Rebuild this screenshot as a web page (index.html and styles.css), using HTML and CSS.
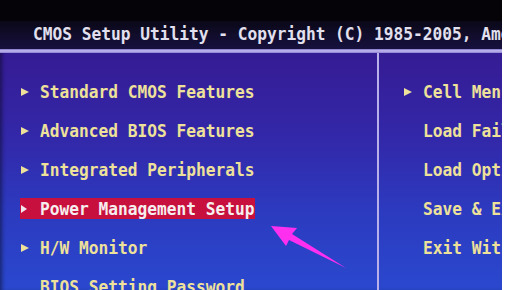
FILE: index.html
```html
<!DOCTYPE html>
<html>
<head>
<meta charset="utf-8">
<link rel="stylesheet" href="styles.css">
</head>
<body>
<div class="screen">
  <div class="top-black"></div>
  <div class="titlebar"><span class="label">CMOS Setup Utility - Copyright (C) 1985-2005, American Megatrends, Inc.</span></div>
  <div class="rule"></div>
  <div class="panels">
    <ul class="menu menu-left">
      <li class="item"><span class="tri"></span><span class="label">Standard CMOS Features</span></li>
      <li class="item"><span class="tri"></span><span class="label">Advanced BIOS Features</span></li>
      <li class="item"><span class="tri"></span><span class="label">Integrated Peripherals</span></li>
      <li class="item"><span class="hl"><span class="tri"></span><span class="label">Power Management Setup</span></span></li>
      <li class="item"><span class="tri"></span><span class="label">H/W Monitor</span></li>
      <li class="item"><span class="tri blank"></span><span class="label">BIOS Setting Password</span></li>
    </ul>
    <ul class="menu menu-right">
      <li class="item"><span class="tri"></span><span class="label">Cell Menu</span></li>
      <li class="item"><span class="tri blank"></span><span class="label">Load Fail-Safe Defaults</span></li>
      <li class="item"><span class="tri blank"></span><span class="label">Load Optimized Defaults</span></li>
      <li class="item"><span class="tri blank"></span><span class="label">Save &amp; Exit Setup</span></li>
      <li class="item"><span class="tri blank"></span><span class="label">Exit Without Saving</span></li>
    </ul>
  </div>
  <svg class="pointer" width="502" height="290" viewBox="0 0 502 290">
    <polygon points="271,226 297,228 292,234 346,268 289,240 286,246" fill="#ff2ff0"/>
  </svg>
</div>
</body>
</html>
```

FILE: styles.css
```css
html, body {
  margin: 0;
  padding: 0;
  background: #ffffff;
}
body {
  width: 507px;
  height: 290px;
  overflow: hidden;
}
.screen {
  position: relative;
  width: 502px;
  height: 290px;
  overflow: hidden;
  background: linear-gradient(180deg, #34178c 0%, #351e98 25%, #3229ab 50%, #2c3abf 72%, #2a48ce 100%);
  font-family: "DejaVu Sans Mono", "Liberation Mono", monospace;
  font-weight: bold;
  font-size: 16.2px;
  box-shadow: inset 4px 0 4px -2px rgba(0,0,0,0.45);
}
.top-black {
  height: 21px;
  background: #050308;
}
.titlebar {
  height: 28px;
  box-sizing: border-box;
  padding-left: 33px;
  line-height: 26px;
  background: linear-gradient(180deg, #0a0818 0%, #17113e 100%);
  color: #e2e0ee;
  white-space: nowrap;
  overflow: hidden;
}
.rule {
  height: 4px;
  background: linear-gradient(180deg, #7c70c4 0%, #c4bcf0 45%, #8c80d0 100%);
}
.panels {
  display: grid;
  grid-template-columns: 379px 1fr;
  height: 236px;
}
.menu {
  list-style: none;
  margin: 0;
  padding: 19px 0 0 0;
}
.menu-left {
  border-right: 2px solid #b8b0e8;
  padding-left: 20px;
}
.menu-right {
  padding-left: 24px;
}
.item {
  height: 39px;
  display: flex;
  align-items: center;
  color: #eee19a;
  white-space: nowrap;
}
.tri {
  width: 0;
  height: 0;
  border-top: 4.5px solid transparent;
  border-bottom: 4.5px solid transparent;
  border-left: 8px solid #eee19a;
  margin-left: 1px;
  margin-right: 11px;
}
.tri.blank {
  border-left-color: transparent;
}
.label {
  display: inline-block;
  transform: scaleY(1.1);
}
.hl {
  display: inline-flex;
  align-items: center;
  height: 21px;
  padding-right: 1px;
  background: #c8103e;
  color: #f6eeee;
}
.hl .tri {
  border-left-color: #f0e8ee;
  border-top-width: 4px;
  border-bottom-width: 4px;
  border-left-width: 6px;
  margin-right: 13px;
}
.pointer {
  position: absolute;
  left: 0;
  top: 0;
}
```
